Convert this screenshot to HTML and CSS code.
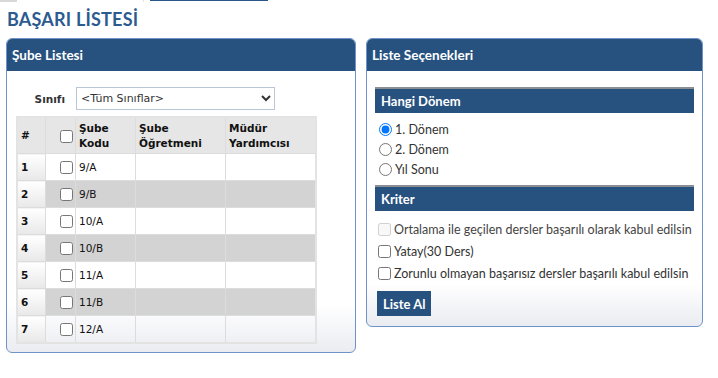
FILE: index.html
```html
<!DOCTYPE html>
<html lang="tr">
<head>
    <meta charset="UTF-8">
    <title>Başarı Listesi</title>
    <link rel="stylesheet" href="styles.css">
</head>
<body>
    <div class="top-strip">
        <span class="strip-gray"></span>
        <span class="strip-line"></span>
        <span class="strip-blue"></span>
    </div>

    <h1 class="page-title">BAŞARI LİSTESİ</h1>

    <div class="panels">
        <!-- Şube Listesi -->
        <div class="panel panel-left">
            <div class="panel-header">Şube Listesi</div>
            <div class="panel-body">
                <div class="filter-row">
                    <label class="filter-label" for="sinif">Sınıfı</label>
                    <select id="sinif" class="filter-select">
                        <option>&lt;Tüm Sınıflar&gt;</option>
                    </select>
                </div>

                <table class="grid">
                    <thead>
                        <tr>
                            <th class="col-no">#</th>
                            <th class="col-check"><input type="checkbox"></th>
                            <th class="col-kod">Şube<br>Kodu</th>
                            <th class="col-ogr">Şube<br>Öğretmeni</th>
                            <th class="col-mdr">Müdür<br>Yardımcısı</th>
                        </tr>
                    </thead>
                    <tbody>
                        <tr><td class="col-no">1</td><td class="col-check"><input type="checkbox"></td><td>9/A</td><td></td><td></td></tr>
                        <tr class="alt"><td class="col-no">2</td><td class="col-check"><input type="checkbox"></td><td>9/B</td><td></td><td></td></tr>
                        <tr><td class="col-no">3</td><td class="col-check"><input type="checkbox"></td><td>10/A</td><td></td><td></td></tr>
                        <tr class="alt"><td class="col-no">4</td><td class="col-check"><input type="checkbox"></td><td>10/B</td><td></td><td></td></tr>
                        <tr><td class="col-no">5</td><td class="col-check"><input type="checkbox"></td><td>11/A</td><td></td><td></td></tr>
                        <tr class="alt"><td class="col-no">6</td><td class="col-check"><input type="checkbox"></td><td>11/B</td><td></td><td></td></tr>
                        <tr><td class="col-no">7</td><td class="col-check"><input type="checkbox"></td><td>12/A</td><td></td><td></td></tr>
                    </tbody>
                </table>
            </div>
        </div>

        <!-- Liste Seçenekleri -->
        <div class="panel panel-right">
            <div class="panel-header">Liste Seçenekleri</div>
            <div class="panel-body">
                <div class="section-bar">Hangi Dönem</div>
                <div class="option-list radios">
                    <label class="option"><input type="radio" name="donem" checked>1. Dönem</label>
                    <label class="option"><input type="radio" name="donem">2. Dönem</label>
                    <label class="option"><input type="radio" name="donem">Yıl Sonu</label>
                </div>

                <div class="section-bar">Kriter</div>
                <div class="option-list checks">
                    <label class="option disabled"><input type="checkbox" disabled>Ortalama ile geçilen dersler başarılı olarak kabul edilsin</label>
                    <label class="option"><input type="checkbox">Yatay(30 Ders)</label>
                    <label class="option"><input type="checkbox">Zorunlu olmayan başarısız dersler başarılı kabul edilsin</label>
                </div>

                <button class="btn">Liste Al</button>
            </div>
        </div>
    </div>
</body>
</html>
```

FILE: styles.css
```css
/* General */
body {
    margin: 0;
    font-family: "Lato", "Open Sans", sans-serif;
    font-size: 12.5px;
    color: #333;
    background: #fff;
}

.top-strip {
    display: flex;
    height: 3px;
}

.strip-gray {
    width: 17px;
    height: 2px;
    background: #d8d8d8;
}

.strip-line {
    width: 1px;
    height: 2px;
    margin-left: 126px;
    background: #e2e2e2;
}

.strip-blue {
    width: 118px;
    height: 1px;
    margin-left: 6px;
    background: #2b568a;
}

.page-title {
    margin: 5px 0 0 7px;
    height: 30px;
    font-size: 18px;
    font-weight: bold;
    color: #2c5b8f;
    letter-spacing: 0.2px;
}

.panels {
    display: flex;
    align-items: flex-start;
    gap: 10px;
    padding-left: 6px;
}

/* Panel */
.panel {
    border: 1px solid #6f93c8;
    border-radius: 6px;
    overflow: hidden;
    background: linear-gradient(to bottom, #fff 85%, #eaecf1);
}

.panel-left {
    width: 348px;
}

.panel-right {
    width: 335px;
}

.panel-header {
    height: 32px;
    line-height: 32px;
    padding-left: 5px;
    background: #27527f;
    color: #fff;
    font-weight: bold;
    font-size: 13.5px;
}

.panel-left .panel-body {
    padding: 16px 0 8px 9px;
}

.panel-right .panel-body {
    padding: 16px 8px 10px 8px;
}

/* Filter */
.filter-row {
    display: flex;
    align-items: center;
    margin-bottom: 6px;
}

.filter-label {
    width: 49px;
    margin-right: 11px;
    text-align: right;
    font-family: "DejaVu Sans", sans-serif;
    font-size: 10.5px;
    font-weight: bold;
    color: #333;
}

.filter-select {
    width: 199px;
    height: 23px;
    border: 1px solid #b9c6d6;
    border-radius: 0;
    font-family: "DejaVu Sans", sans-serif;
    font-size: 11px;
    color: #333;
    background: #fff;
}

/* Table */
.grid {
    border-collapse: collapse;
    border: 2px solid #e3e3e3;
    width: 301px;
    font-family: "DejaVu Sans", sans-serif;
    font-size: 10.5px;
    color: #111;
}

.grid th,
.grid td {
    border: 1px solid #dcdcdc;
    padding: 0 3px;
    height: 26px;
    text-align: left;
    vertical-align: middle;
}

.grid thead th {
    height: 35px;
    background: #e6e6e6;
    font-weight: bold;
    line-height: 15px;
}

.grid .col-no {
    width: 21px;
    font-weight: bold;
    background: linear-gradient(to bottom, #fff, #e8e8e8);
}

.grid thead .col-no {
    background: #e6e6e6;
}

.grid .col-check {
    width: 27px;
    padding: 0 2px 0 0;
    text-align: right;
}

.grid .col-kod {
    width: 53px;
}

.grid .col-ogr {
    width: 83px;
}

.grid tr.alt td {
    background: #d3d3d3;
}

.grid tr.alt td.col-no {
    background: linear-gradient(to bottom, #fff, #e8e8e8);
}

.grid input[type="checkbox"] {
    width: 13px;
    height: 13px;
    margin: 0;
    vertical-align: middle;
}

/* Options */
.section-bar {
    height: 24px;
    line-height: 25px;
    padding-left: 6px;
    border-top: 2px solid #8a8f96;
    background: #27527f;
    color: #fff;
    font-weight: bold;
    font-size: 13px;
}

.option-list {
    display: flex;
    flex-direction: column;
}

.radios {
    padding: 6px 0 6px 4px;
}

.radios .option {
    height: 20px;
}

.checks {
    padding: 7px 0 7px 3px;
}

.checks .option {
    height: 22px;
}

.option {
    display: flex;
    align-items: center;
    white-space: nowrap;
    color: #333;
}

.option input {
    margin: 0 3px 0 0;
    width: 13px;
    height: 13px;
}

.option.disabled {
    color: #444;
}

.btn {
    display: block;
    margin-left: 2px;
    height: 25px;
    padding: 0 6px;
    border: none;
    background: #27527f;
    color: #fff;
    font-family: inherit;
    font-size: 13px;
    font-weight: bold;
    cursor: pointer;
}
```
